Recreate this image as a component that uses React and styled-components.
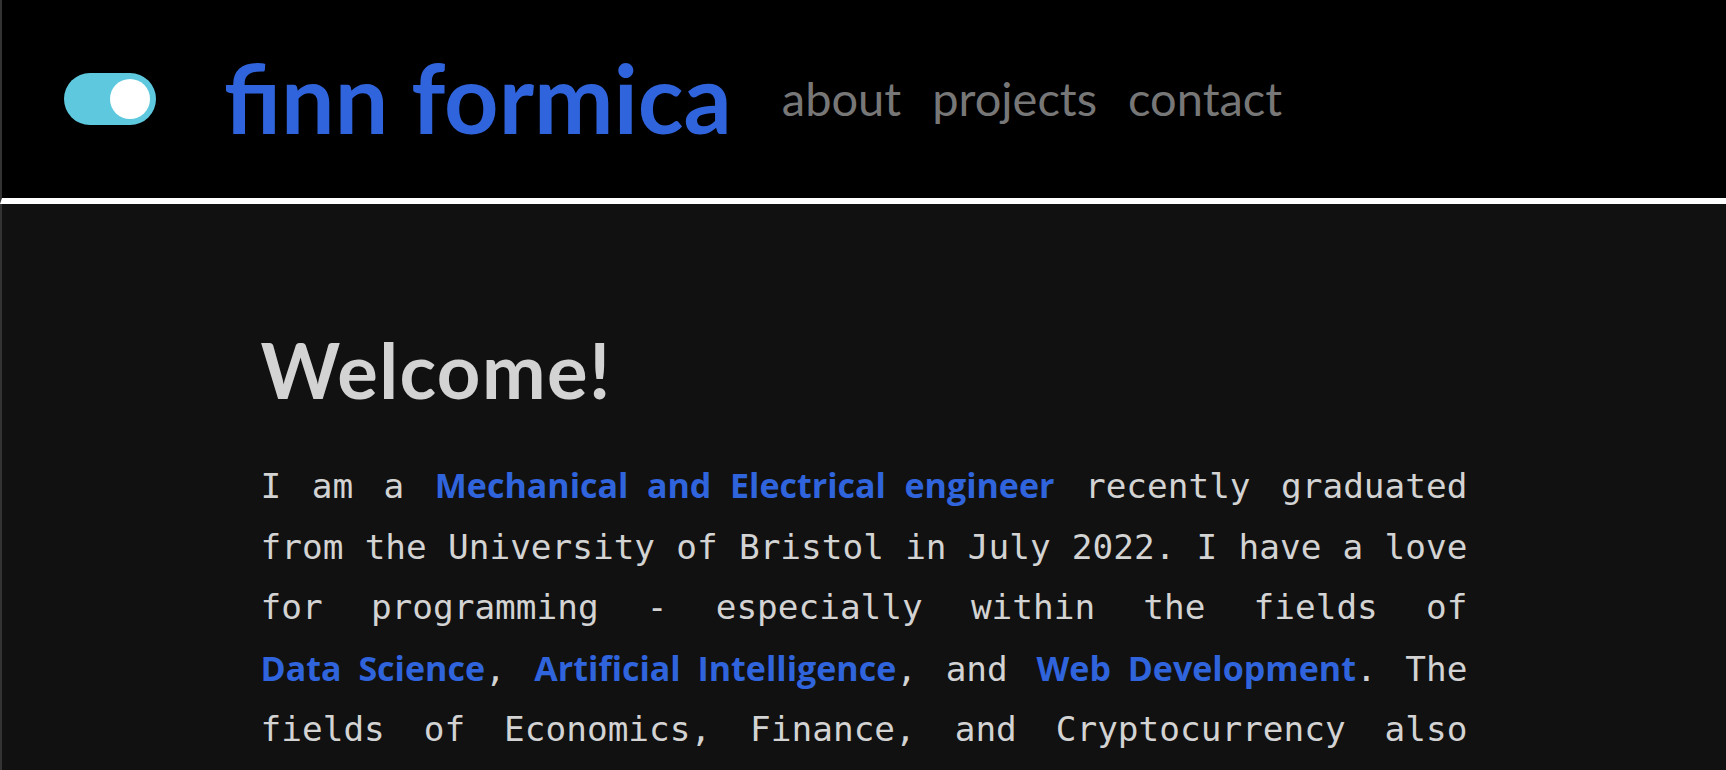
import React from "react";
import styled, { createGlobalStyle } from "styled-components";

const Global = createGlobalStyle`
  html, body { margin: 0; padding: 0; background: #111111; }
  body { font-family: Lato, "Liberation Sans", sans-serif; }
  * { box-sizing: border-box; }
`;

const Header = styled.header`
  display: flex;
  align-items: center;
  height: 204px;
  padding-left: 62px;
  background: #000;
  border-left: 2px solid #333;
  border-bottom: 6px solid #fff;
`;

const Toggle = styled.div`
  display: flex;
  justify-content: ${(p) => (p.$on ? "flex-end" : "flex-start")};
  align-items: center;
  width: 92px;
  height: 52px;
  padding: 6px;
  border-radius: 26px;
  background: #5ec9de;
  flex-shrink: 0;
`;

const Knob = styled.span`
  display: block;
  width: 40px;
  height: 40px;
  border-radius: 50%;
  background: #fff;
`;

const Logo = styled.a`
  margin-left: 68px;
  font-family: Lato, sans-serif;
  font-weight: 700;
  font-size: 95px;
  line-height: 1;
  color: #3064dc;
  text-decoration: none;
  white-space: nowrap;
  margin-bottom: 4px;
`;

const Nav = styled.nav`
  display: flex;
  gap: 31px;
  margin-left: 50px;
  margin-bottom: 2px;
`;

const NavLink = styled.a`
  font-family: Lato, sans-serif;
  font-weight: 400;
  font-size: 47px;
  color: #777;
  text-decoration: none;
`;

const Main = styled.main`
  background: #111;
  border-left: 2px solid #333;
  padding-top: 120px;
  min-height: 600px;
`;

const Content = styled.section`
  width: 70%;
  margin: 0 auto;
`;

const Heading = styled.h1`
  margin: 0;
  font-family: Lato, sans-serif;
  font-weight: 700;
  font-size: 76px;
  letter-spacing: 1.4px;
  line-height: 1.2;
  color: #d3d3d3;
`;

const Paragraph = styled.p`
  margin: 40px 0 0;
  font-family: "DejaVu Sans Mono", "Liberation Mono", monospace;
  font-size: 34.4px;
  line-height: 60.5px;
  color: #d3d3d3;
  text-align: justify;
`;

const Highlight = styled.a`
  font-family: "Open Sans", Lato, sans-serif;
  font-weight: 700;
  font-size: 34px;
  color: #3064dc;
  text-decoration: none;
  white-space: nowrap;
`;

export default function App() {
  return (
    <>
      <Global />
      <Header>
        <Toggle $on>
          <Knob />
        </Toggle>
        <Logo href="#">finn formica</Logo>
        <Nav>
          <NavLink href="#">about</NavLink>
          <NavLink href="#">projects</NavLink>
          <NavLink href="#">contact</NavLink>
        </Nav>
      </Header>
      <Main>
        <Content>
          <Heading>Welcome!</Heading>
          <Paragraph>
            I am a <Highlight href="#">Mechanical and Electrical engineer</Highlight> recently
            graduated from the University of Bristol in July 2022. I have a love for
            programming - especially within the fields of{" "}
            <Highlight href="#">Data Science</Highlight>,{" "}
            <Highlight href="#">Artificial Intelligence</Highlight>, and{" "}
            <Highlight href="#">Web Development</Highlight>. The fields of Economics,
            Finance, and Cryptocurrency also interest me greatly.
          </Paragraph>
        </Content>
      </Main>
    </>
  );
}
